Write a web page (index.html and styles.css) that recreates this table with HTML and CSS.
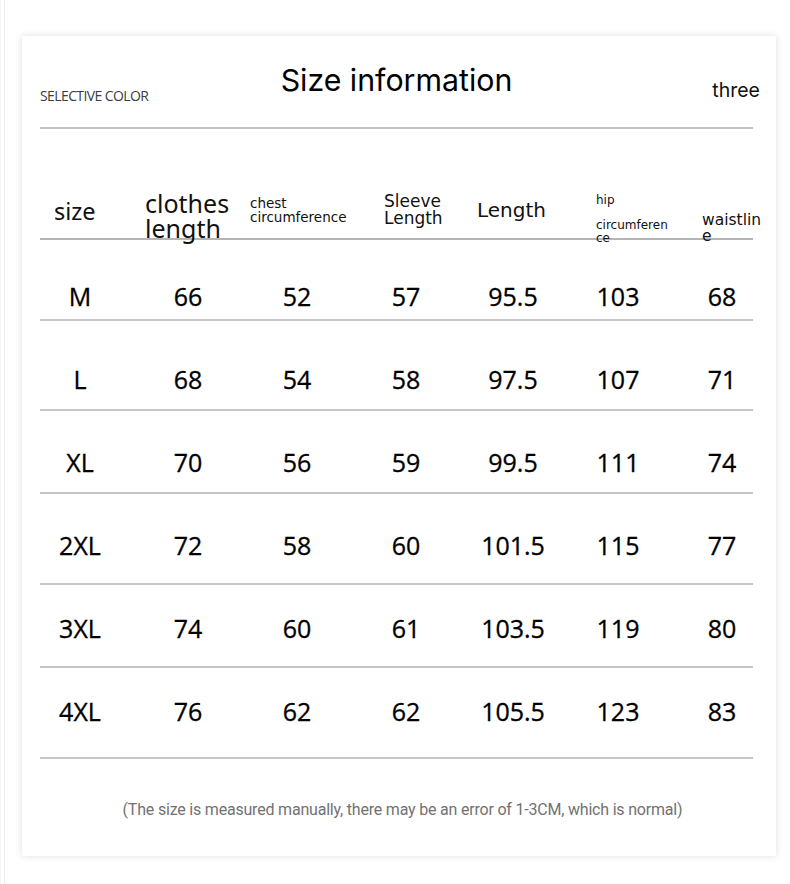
FILE: index.html
```html
<!DOCTYPE html>
<html lang="en">
<head>
<meta charset="utf-8">
<title>Size information</title>
<link rel="stylesheet" href="styles.css">
</head>
<body>
<div class="page">
  <div class="card">
    <div class="top">
      <div class="brand">SELECTIVE COLOR</div>
      <h1 class="title">Size information</h1>
      <div class="three">three</div>
    </div>
    <div class="divider"></div>

    <div class="row head">
      <div class="grid">
        <div class="h h-size">size</div>
        <div class="h h-clothes">clothes length</div>
        <div class="h h-chest">chest circumference</div>
        <div class="h h-sleeve">Sleeve Length</div>
        <div class="h h-length">Length</div>
        <div class="h h-hip"><span class="hip-top">hip</span><span class="hip-bot">circumference</span></div>
        <div class="h h-waist">waistline</div>
      </div>
    </div>

    <div class="row r1">
      <div class="grid"><div>M</div><div>66</div><div>52</div><div>57</div><div>95.5</div><div>103</div><div>68</div></div>
    </div>
    <div class="row r2">
      <div class="grid"><div>L</div><div>68</div><div>54</div><div>58</div><div>97.5</div><div>107</div><div>71</div></div>
    </div>
    <div class="row r3">
      <div class="grid"><div>XL</div><div>70</div><div>56</div><div>59</div><div>99.5</div><div>111</div><div>74</div></div>
    </div>
    <div class="row r4">
      <div class="grid"><div>2XL</div><div>72</div><div>58</div><div>60</div><div>101.5</div><div>115</div><div>77</div></div>
    </div>
    <div class="row r5">
      <div class="grid"><div>3XL</div><div>74</div><div>60</div><div>61</div><div>103.5</div><div>119</div><div>80</div></div>
    </div>
    <div class="row r6">
      <div class="grid"><div>4XL</div><div>76</div><div>62</div><div>62</div><div>105.5</div><div>123</div><div>83</div></div>
    </div>

    <p class="note">(The size is measured manually, there may be an error of 1-3CM, which is normal)</p>
  </div>
</div>
</body>
</html>
```
FILE: styles.css
```css
* { box-sizing: border-box; }
html, body { margin: 0; padding: 0; background: #ffffff; }
body { font-family: "Open Sans", "Noto Sans", sans-serif; color: #111; }

.page {
  width: 790px;
  height: 884px;
  padding: 36px 0 0 22px;
  border-left: 1px solid #f6f6f6;
  position: relative;
}
.page::before {
  content: "";
  position: absolute;
  left: 3px; top: 0; bottom: 0;
  width: 1px;
  background: #ececec;
}

.card {
  width: 754px;
  height: 820px;
  margin-left: -1px;
  background: #fff;
  box-shadow: 0 0 7px rgba(0,0,0,0.13);
  padding: 0 23px 0 18px;
}

.top {
  height: 91px;
  display: grid;
  grid-template-columns: 1fr auto 1fr;
  align-items: start;
}
.brand {
  margin-top: 51px;
  font-family: "Open Sans", sans-serif;
  font-size: 14px;
  line-height: 18px;
  letter-spacing: -0.6px;
  color: #3c3c3c;
}
.title {
  margin: 0;
  margin-top: 25px;
  font-family: "Inter", sans-serif;
  font-weight: 400;
  font-size: 30.3px;
  line-height: 38px;
  color: #000;
}
.three {
  justify-self: end;
  margin-top: 42px;
  margin-right: -7px;
  font-family: "Inter", sans-serif;
  font-size: 19.5px;
  line-height: 24px;
  color: #111;
}

.divider { height: 2px; background: #c3c3c3; }

.row {
  border-bottom: 2px solid #c6c6c6;
}
.grid {
  margin-left: -14px;
  display: grid;
  grid-template-columns: 108px 108px 110px 108px 106px 104px 104px;
  align-items: start;
}

.head { height: 111px; border-bottom-color: #b5b5b5; }
.head .grid { height: 109px; }
.h { font-family: "DejaVu Sans", sans-serif; color: #111; }
.h-size { padding: 69px 0 0 28px; font-family: "Noto Sans", sans-serif; font-size: 23.5px; line-height: 26px; }
.h-clothes { padding: 62px 0 0 11px; font-family: "Noto Sans", sans-serif; font-size: 25px; line-height: 25px; width: 100px; }
.h-chest { padding: 67px 0 0 8px; font-size: 13.5px; line-height: 14px; }
.h-sleeve { padding: 64px 0 0 32px; font-size: 17px; line-height: 17px; width: 100px; }
.h-length { padding: 69px 0 0 17px; font-size: 20px; line-height: 24px; }
.h-hip { padding: 65px 0 0 30px; font-size: 12px; line-height: 13px; }
.hip-top { display: block; margin-bottom: 12px; }
.hip-bot { display: block; width: 75px; word-break: break-all; }
.h-waist { padding: 83px 0 0 32px; font-size: 15.5px; line-height: 16px; word-break: break-all; width: 96px; }

.r1, .r2, .r3, .r4, .r5, .r6 {
  font-family: "Open Sans", "Noto Sans", sans-serif;
  font-size: 25px;
  line-height: 30px;
  color: #000;
  -webkit-text-stroke: 0.3px #000;
}
.r1 .grid > div, .r2 .grid > div, .r3 .grid > div,
.r4 .grid > div, .r5 .grid > div, .r6 .grid > div { text-align: center; }

.r1 { height: 81px; padding-top: 41px; }
.r2 { height: 90px; padding-top: 43px; }
.r3 { height: 83px; padding-top: 36px; }
.r4 { height: 91px; padding-top: 36px; }
.r5 { height: 83px; padding-top: 28px; }
.r6 { height: 91px; padding-top: 28px; }

.note {
  margin: 41px 0 0 0;
  padding-left: 12px;
  text-align: center;
  font-family: "Roboto", sans-serif;
  font-size: 16px;
  line-height: 20px;
  letter-spacing: -0.2px;
  color: #727272;
}
```
